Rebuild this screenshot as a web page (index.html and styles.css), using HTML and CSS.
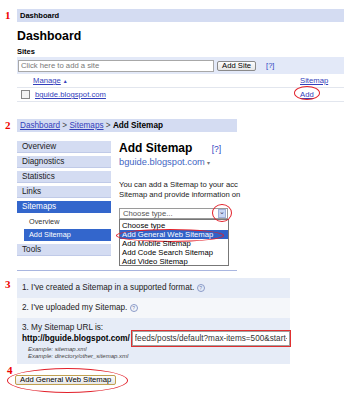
FILE: index.html
```html
<!DOCTYPE html>
<html lang="en">
<head>
    <meta charset="UTF-8">
    <meta name="viewport" content="width=device-width, initial-scale=1.0">
    <title>Add Sitemap</title>
    <link rel="stylesheet" href="styles.css">
</head>
<body>
<div class="page">

    <!-- Step 1 : dashboard -->
    <div class="step step1">
        <span class="num">1</span>
        <div class="bar">Dashboard</div>
        <h1>Dashboard</h1>
        <div class="sites-label">Sites</div>
        <div class="add-strip">
            <input type="text" class="site-input" placeholder="Click here to add a site">
            <button class="btn">Add Site</button>
            <a class="help-link">[?]</a>
        </div>
        <div class="sites-row head">
            <span class="col-name"><a>Manage</a> <span class="sort">&#9650;</span></span>
            <span class="col-map"><a>Sitemap</a></span>
        </div>
        <div class="sites-row">
            <span class="col-name"><span class="check"></span><a>bguide.blogspot.com</a></span>
            <span class="col-map"><a>Add</a><span class="ring ring-add"></span></span>
        </div>
    </div>

    <!-- Step 2 : add sitemap -->
    <div class="step step2">
        <span class="num">2</span>
        <div class="bar crumbs"><a>Dashboard</a> &gt; <a>Sitemaps</a> &gt; <b>Add Sitemap</b></div>
        <div class="layout">
            <ul class="nav">
                <li>Overview</li>
                <li>Diagnostics</li>
                <li>Statistics</li>
                <li>Links</li>
                <li class="on">Sitemaps</li>
                <li class="sub">Overview</li>
                <li class="sub on">Add Sitemap</li>
                <li>Tools</li>
            </ul>
            <div class="content">
                <h2>Add Sitemap <a class="help-link">[?]</a></h2>
                <div class="site-name">bguide.blogspot.com <span class="caret">&#9662;</span></div>
                <p class="intro">You can add a Sitemap to your acc<br>Sitemap and provide information on</p>
                <div class="select">
                    <span>Choose type...</span>
                    <span class="arrow">&#8964;</span>
                    <span class="ring ring-arrow"></span>
                </div>
                <ul class="options">
                    <li>Choose type</li>
                    <li class="on">Add General Web Sitemap<span class="ring ring-opt"></span></li>
                    <li>Add Mobile Sitemap</li>
                    <li>Add Code Search Sitemap</li>
                    <li>Add Video Sitemap</li>
                </ul>
            </div>
        </div>
    </div>

    <!-- Step 3 : form -->
    <div class="step step3">
        <span class="num">3</span>
        <div class="form">
            <div class="form-row">1. I've created a Sitemap in a supported format. <span class="qmark">?</span></div>
            <div class="form-row light">2. I've uploaded my Sitemap. <span class="qmark">?</span></div>
            <div class="form-row last">
                <div>3. My Sitemap URL is:</div>
                <div class="url-line">
                    <b>http://bguide.blogspot.com/</b>
                    <input type="text" class="url-input" value="feeds/posts/default?max-items=500&amp;start-index=1">
                </div>
                <div class="example">Example: sitemap.xml</div>
                <div class="example">Example: directory/other_sitemap.xml</div>
            </div>
        </div>
    </div>

    <!-- Step 4 : submit -->
    <div class="step step4">
        <span class="num">4</span>
        <button class="btn submit">Add General Web Sitemap</button>
        <span class="ring ring-submit"></span>
    </div>

</div>
</body>
</html>
```

FILE: styles.css
```css
body {
    margin: 0;
    background: #fff;
    color: #000;
    font-family: "Liberation Sans", Arial, sans-serif;
    font-size: 7.7px;
}

a {
    color: #3340bb;
    text-decoration: underline;
}

ul {
    list-style: none;
    margin: 0;
    padding: 0;
}

.page {
    padding: 9px 9px 0 17px;
}

.step {
    position: relative;
}

/* red annotations */
.num {
    position: absolute;
    left: -12px;
    top: 0;
    color: #e00;
    font-family: "Liberation Serif", serif;
    font-weight: bold;
    font-size: 11px;
    line-height: 12px;
}

.ring {
    position: absolute;
    border: 1px solid #e2202a;
    border-radius: 50%;
}

.bar {
    background: #d4dcf2;
    height: 13px;
    line-height: 13px;
    padding-left: 3px;
    font-weight: bold;
    font-size: 7.5px;
}

/* step 1 */
h1 {
    margin: 7px 0 0;
    font-size: 12.3px;
    line-height: 14px;
}

.sites-label {
    margin-top: 4px;
    font-weight: bold;
    font-size: 7.5px;
    line-height: 9px;
}

.add-strip {
    margin-top: 1px;
    height: 17px;
    background: #e3e9f8;
    display: flex;
    align-items: center;
    padding-left: 1px;
}

.site-input {
    width: 196px;
    height: 12px;
    box-sizing: border-box;
    border: 1px solid #a8a8a8;
    padding: 0 2px;
    font: 7.7px "Liberation Sans", Arial, sans-serif;
}

.site-input::placeholder {
    color: #777;
}

.btn {
    font: 7.7px "Liberation Sans", Arial, sans-serif;
    color: #000;
    background: linear-gradient(#fdfdfd, #e6e6e6);
    border: 1px solid #8a8a8a;
    border-radius: 2px;
    padding: 0 4px;
    height: 10px;
    line-height: 8px;
    margin-left: 3px;
}

.help-link {
    margin-left: 10px;
    font-size: 7.5px;
    text-decoration: none;
    color: #2a3ec0;
}

.sites-row {
    display: flex;
    height: 13px;
    align-items: center;
    border-bottom: 1px solid #e2e6ee;
}

.col-name {
    flex: 1;
    display: flex;
    align-items: center;
    padding-left: 4px;
}

.head .col-name {
    padding-left: 16px;
}

.sort {
    font-size: 5px;
    color: #3340bb;
    margin-left: 2px;
}

.check {
    width: 7px;
    height: 7px;
    border: 1px solid #888;
    background: #f4f4f4;
    margin-right: 5px;
}

.col-map {
    position: relative;
    width: 44px;
}

.ring-add {
    left: -6px;
    top: -4px;
    width: 24px;
    height: 12px;
}

/* step 2 */
.step2 {
    margin-top: 17px;
    width: 220px;
}

.crumbs {
    font-weight: normal;
    font-size: 8.2px;
    padding-left: 3px;
    color: #444;
}

.crumbs b {
    color: #000;
}

.layout {
    display: flex;
    gap: 8px;
    margin-top: 9px;
    padding-bottom: 4px;
    border-bottom: 1px solid #a9b6e0;
}

.nav {
    width: 94px;
    flex-shrink: 0;
    font-size: 8.2px;
}

.nav li {
    height: 12px;
    line-height: 12px;
    padding-left: 5px;
    margin-bottom: 3px;
    background: #d4dcf2;
    color: #222;
    box-shadow: inset 0 -1px 0 #c0cae8;
}

.nav li.on {
    background: #3366cc;
    color: #fff;
    box-shadow: none;
}

.nav li.sub {
    background: none;
    box-shadow: none;
    margin-left: 7px;
    padding-left: 5px;
    font-size: 7.3px;
    margin-bottom: 1px;
    color: #333;
}

.nav li.sub.on {
    background: #3366cc;
    color: #fff;
    margin-bottom: 3px;
}

.content {
    flex: 1;
    min-width: 0;
}

h2 {
    margin: 0;
    font-size: 12px;
    line-height: 14px;
}

h2 .help-link {
    margin-left: 16px;
    font-weight: normal;
    font-size: 8.5px;
}

.site-name {
    font-size: 9.3px;
    line-height: 12px;
    color: #3f66c4;
}

.caret {
    color: #777;
    font-size: 6px;
}

.intro {
    margin: 11px 0 0;
    line-height: 10px;
    white-space: nowrap;
    color: #222;
}

.select {
    position: relative;
    margin-top: 8px;
    width: 109px;
    height: 11px;
    box-sizing: border-box;
    border: 1px solid #9a9a9a;
    display: flex;
    align-items: center;
    justify-content: space-between;
    padding-left: 3px;
    color: #555;
}

.arrow {
    width: 8px;
    height: 9px;
    background: #c8d6f4;
    border: 1px solid #9fb0d8;
    box-sizing: border-box;
    color: #335;
    font-size: 7px;
    line-height: 4px;
    text-align: center;
    margin-right: 1px;
}

.ring-arrow {
    right: -5px;
    top: -5px;
    width: 18px;
    height: 16px;
}

.options {
    width: 110px;
    height: 47px;
    box-sizing: border-box;
    border: 1px solid #777;
    padding-top: 0.5px;
}

.options li {
    position: relative;
    height: 9px;
    line-height: 9px;
    padding-left: 2px;
}

.options li.on {
    background: #3162c8;
    color: #fff;
}

.ring-opt {
    left: -4px;
    top: -1px;
    width: 106px;
    height: 11px;
}

/* step 3 */
.step3 {
    margin-top: 7px;
}

.form {
    width: 273px;
    font-size: 8.2px;
    color: #222;
}

.form-row {
    height: 20px;
    line-height: 20px;
    padding-left: 5px;
    background: #e6ecf7;
}

.form-row.light {
    background: #f5f7fa;
}

.qmark {
    display: inline-block;
    width: 6px;
    height: 6px;
    border: 1px solid #8a9ac8;
    border-radius: 50%;
    font-size: 5px;
    line-height: 6px;
    text-align: center;
    color: #7080b0;
    vertical-align: middle;
}

.form-row.last {
    height: 46px;
    line-height: 9px;
    padding-top: 5px;
    box-sizing: border-box;
}

.url-line {
    display: flex;
    align-items: center;
    height: 15px;
    margin-top: -1px;
}

.url-line b {
    color: #000;
}

.url-input {
    margin-left: 2px;
    width: 164px;
    height: 15px;
    box-sizing: border-box;
    border: 1px solid #a0a0a0;
    box-shadow: 0 0 0 1px #e03030;
    padding: 0 2px;
    font: 8.2px "Liberation Sans", Arial, sans-serif;
    color: #333;
}

.example {
    padding-left: 6px;
    font-style: italic;
    font-size: 6px;
    line-height: 7px;
    color: #444;
}

/* step 4 */
.step4 {
    margin-top: 11px;
    height: 26px;
}

.step4 .num {
    top: -11px;
    left: -10px;
}

.submit {
    margin-left: -2px;
    height: 10px;
    font-size: 7.7px;
    border-color: #c0a050;
    padding: 0 4px;
}

.ring-submit {
    left: -10px;
    top: -7px;
    width: 119px;
    height: 23px;
}
```
